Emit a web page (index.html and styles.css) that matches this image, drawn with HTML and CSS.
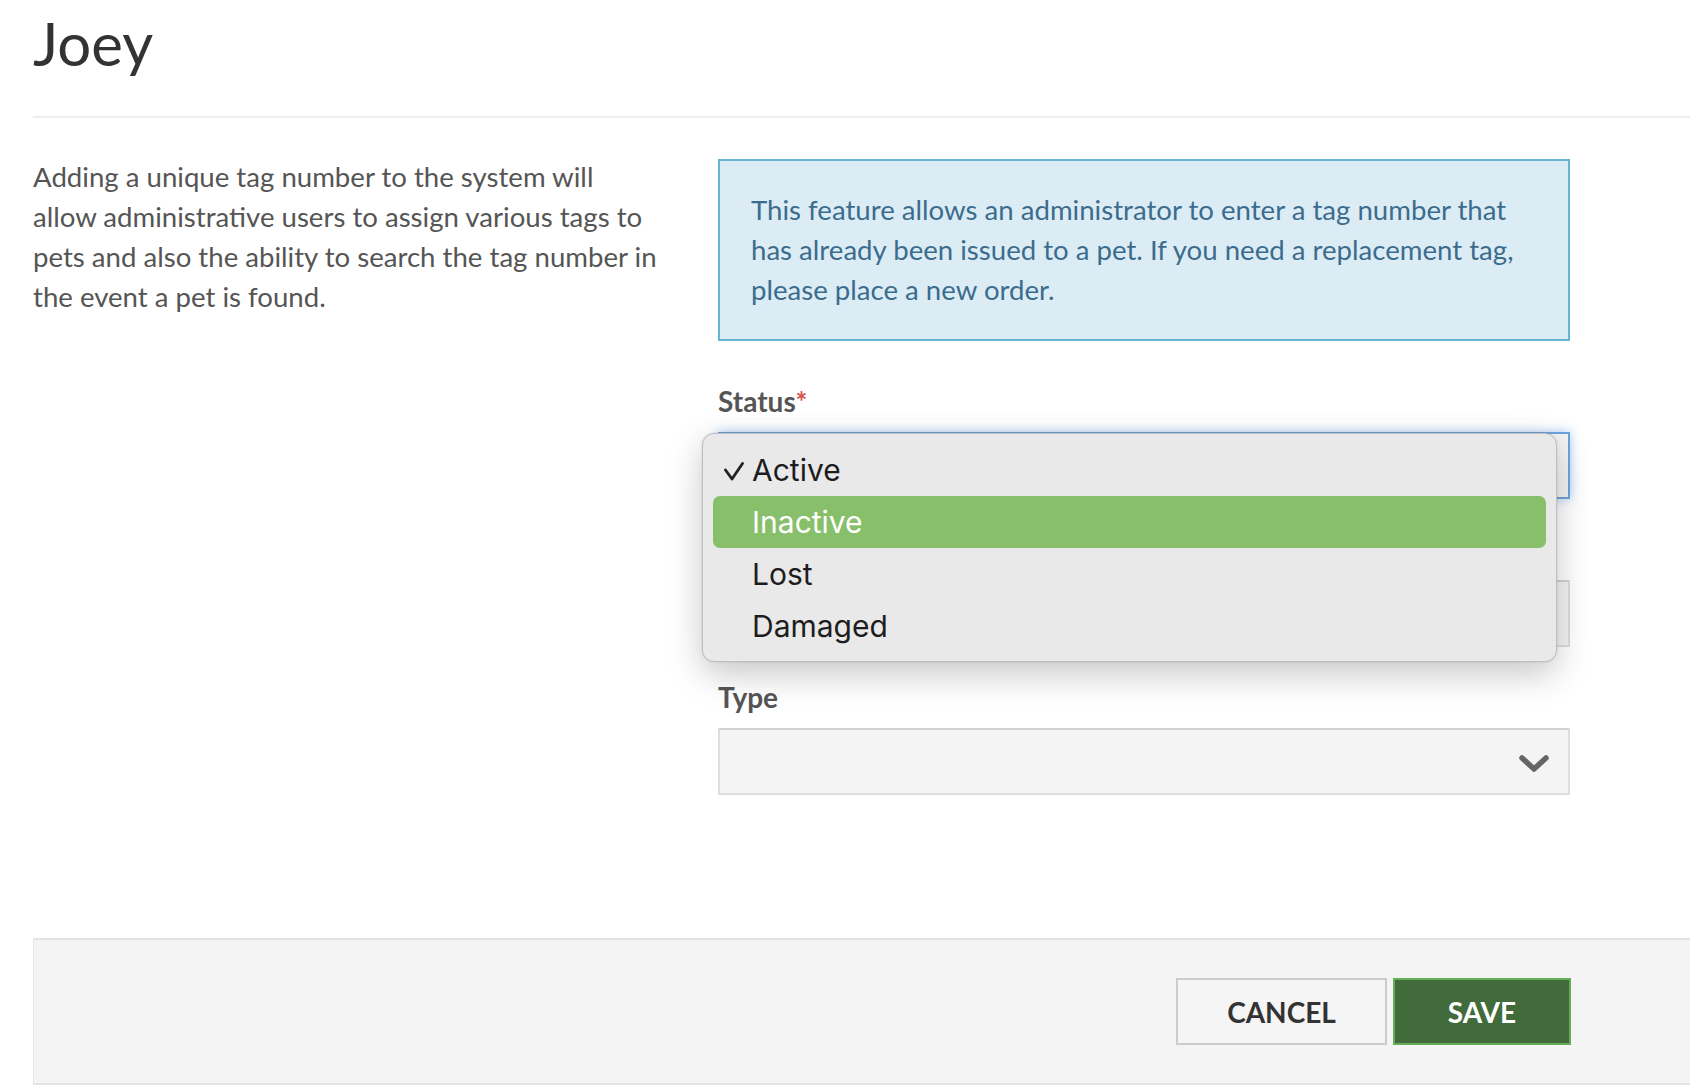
FILE: index.html
```html
<!DOCTYPE html>
<html lang="en">
<head>
    <meta charset="UTF-8">
    <meta name="viewport" content="width=device-width, initial-scale=1.0">
    <title>Joey - Tags</title>
    <link rel="stylesheet" href="styles.css">
</head>
<body>
    <div class="page">
        <h1 class="title">Joey</h1>
        <hr class="divider">

        <div class="content">
            <p class="intro">Adding a unique tag number to the system will allow administrative users to assign various tags to pets and also the ability to search the tag number in the event a pet is found.</p>

            <form class="tag-form">
                <div class="alert-info">This feature allows an administrator to enter a tag number that has already been issued to a pet. If you need a replacement tag, please place a new order.</div>

                <div class="form-group status-group">
                    <label>Status<span class="req">*</span></label>
                    <div class="select focused"></div>
                    <ul class="popup-menu">
                        <li class="checked"><svg class="check" width="20" height="19" viewBox="0 0 20 19"><polyline points="1.5,8 8,17 18.5,1.5" fill="none" stroke="#222" stroke-width="2.8" stroke-linecap="round" stroke-linejoin="round"/></svg>Active</li>
                        <li class="hover">Inactive</li>
                        <li>Lost</li>
                        <li>Damaged</li>
                    </ul>
                </div>

                <!-- covered by the open status menu -->
                <div class="form-group">
                    <label class="covered">Tag Number</label>
                    <input class="field" type="text">
                </div>

                <div class="form-group">
                    <label>Type</label>
                    <div class="select">
                        <svg class="chevron" width="32" height="20" viewBox="0 0 32 20"><polyline points="4,4 16,15 28,4" fill="none" stroke="#666" stroke-width="5.5" stroke-linecap="round" stroke-linejoin="round"/></svg>
                    </div>
                </div>
            </form>
        </div>

        <div class="footer">
            <button type="button" class="btn btn-cancel">Cancel</button>
            <button type="button" class="btn btn-save">Save</button>
        </div>
    </div>
</body>
</html>
```

FILE: styles.css
```css
body {
    margin: 0;
    padding: 0;
    background: #fff;
    font-family: Lato, "Open Sans", sans-serif;
    font-size: 27.6px;
    line-height: 40px;
    color: #555;
    overflow: hidden;
}
.page {
    padding: 10px 0 0 33px;
}
.title {
    margin: 0;
    font-size: 60px;
    line-height: 66px;
    font-weight: 400;
    color: #333;
}
.divider {
    margin: 40px 0 0;
    border: none;
    border-top: 2px solid #eeeeee;
}
.content {
    display: grid;
    grid-template-columns: 627px 852px;
    column-gap: 58px;
    margin-top: 41px;
    align-items: start;
}
.intro {
    margin: -2px 0 0;
}
.alert-info {
    background: #dcecf5;
    border: 2px solid #64b6d2;
    color: #3b6c8e;
    padding: 29px 31px;
    margin-bottom: 40px;
}
.form-group {
    margin-bottom: 30px;
}
.form-group:last-child {
    margin-bottom: 0;
}
.form-group label {
    display: block;
    font-weight: 700;
    font-size: 28px;
    color: #555;
    margin-bottom: 11px;
}
.form-group label.covered {
    visibility: hidden;
}
.req {
    color: #d9534f;
}
.select,
.field {
    display: block;
    box-sizing: border-box;
    width: 100%;
    height: 67px;
    background: #f4f4f4;
    border: 2px solid #dedede;
    border-top-color: #d2d2d2;
    position: relative;
    margin: 0;
    padding: 0;
}
.select.focused {
    border-color: #6fa3dc;
    box-shadow: 0 0 10px rgba(102, 163, 233, 0.55);
}
.chevron {
    position: absolute;
    right: 18px;
    top: 24px;
}
.status-group {
    position: relative;
}
.popup-menu {
    position: absolute;
    left: -16px;
    top: 52px;
    width: 855px;
    box-sizing: border-box;
    margin: 0;
    padding: 10px 10px 9px;
    list-style: none;
    background: #e9e9e9;
    border: 1px solid #bfbfbf;
    border-radius: 12px;
    box-shadow: 0 12px 34px rgba(0, 0, 0, 0.22), 0 0 2px rgba(0, 0, 0, 0.15);
    z-index: 5;
    font-family: Inter, "Noto Sans", sans-serif;
    font-size: 30px;
    color: #1d1d1d;
}
.popup-menu li {
    position: relative;
    height: 52px;
    line-height: 52px;
    padding-left: 39px;
    border-radius: 7px;
}
.popup-menu li.hover {
    background: #87bf6a;
    color: #fff;
}
.check {
    position: absolute;
    left: 11px;
    top: 18px;
}
.footer {
    display: flex;
    justify-content: flex-end;
    gap: 6px;
    margin-top: 143px;
    padding: 38px 119px 38px 0;
    background: #f4f4f4;
    border-top: 2px solid #e3e3e3;
    border-bottom: 2px solid #e3e3e3;
    border-left: 1px solid #e6e6e6;
}
.btn {
    height: 67px;
    font-family: Lato, sans-serif;
    font-size: 28px;
    font-weight: 700;
    text-transform: uppercase;
    cursor: pointer;
    padding: 0;
}
.btn-cancel {
    width: 211px;
    background: #f5f5f5;
    border: 2px solid #cccccc;
    color: #333;
}
.btn-save {
    width: 178px;
    background: #426b3b;
    border: 2px solid #66ad59;
    color: #fff;
}
```
